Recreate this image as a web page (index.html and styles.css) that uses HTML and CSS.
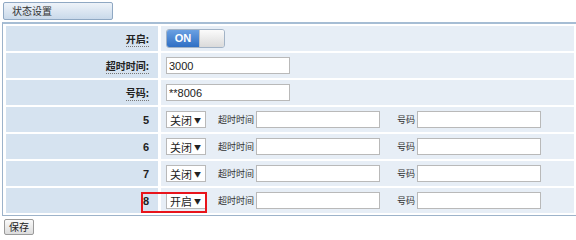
FILE: index.html
```html
<!DOCTYPE html>
<html lang="zh-CN">
<head>
<meta charset="UTF-8" />
<title>状态设置</title>
<link rel="stylesheet" href="styles.css">
</head>
<body>

<div class="tab">状态设置</div>

<table class="grid">
  <tr>
    <th><span class="lbl">开启:</span></th>
    <td><span class="toggle"><span class="on">ON</span><span class="off"></span></span></td>
  </tr>
  <tr>
    <th><span class="lbl">超时时间:</span></th>
    <td><input class="txt" type="text" value="3000"></td>
  </tr>
  <tr>
    <th><span class="lbl">号码:</span></th>
    <td><input class="txt" type="text" value="**8006"></td>
  </tr>
  <tr class="ext">
    <th>5</th>
    <td><div class="line"><span class="sel">关闭<i>▼</i></span><span class="cap">超时时间</span><input class="txt" type="text"><span class="cap gap">号码</span><input class="txt" type="text"></div></td>
  </tr>
  <tr class="ext">
    <th>6</th>
    <td><div class="line"><span class="sel">关闭<i>▼</i></span><span class="cap">超时时间</span><input class="txt" type="text"><span class="cap gap">号码</span><input class="txt" type="text"></div></td>
  </tr>
  <tr class="ext">
    <th>7</th>
    <td><div class="line"><span class="sel">关闭<i>▼</i></span><span class="cap">超时时间</span><input class="txt" type="text"><span class="cap gap">号码</span><input class="txt" type="text"></div></td>
  </tr>
  <tr class="ext">
    <th>8</th>
    <td><div class="line"><span class="sel">开启<i>▼</i></span><span class="cap">超时时间</span><input class="txt" type="text"><span class="cap gap">号码</span><input class="txt" type="text"></div></td>
  </tr>
</table>

<!-- red highlight box drawn over row 8 -->
<div class="mark"></div>

<button class="save" type="button">保存</button>

</body>
</html>
```

FILE: styles.css
```css
html { overflow: hidden; }
body { margin: 0; padding: 2px 0 0 2px; background: #fff; color: #222; font-family: "Liberation Sans", "Noto Sans CJK SC", sans-serif; font-size: 11px; position: relative; }

.tab { width: 100px; height: 16px; margin-left: 1px; padding-left: 8px; line-height: 16px; color: #333; border: 1px solid #8fa8c3; border-radius: 2px; background: linear-gradient(#eef3f9, #c9d9ea); font-family: "Noto Sans CJK SC", sans-serif; font-size: 10px; }

.grid { width: 576px; margin-top: 2px; border-collapse: separate; border-spacing: 3px 2px; border: 1px solid #9db3ca; border-top: 2px solid #a6bdd4; background: #fff; }
.grid th { width: 143px; height: 25px; padding: 0 9px 0 0; text-align: right; background: #d6e3f0; font-family: "Noto Sans CJK SC", sans-serif; font-size: 10px; font-weight: bold; color: #222; }
.grid td { height: 25px; padding: 0 0 0 5px; background: #e7eef6; }
.grid .ext th { font-family: "Liberation Sans", sans-serif; font-size: 11px; }
.lbl { border-bottom: 1px dotted #777; }

.toggle { display: flex; width: 59px; height: 19px; border: 1px solid #a2b3c6; border-radius: 3px; overflow: hidden; box-sizing: border-box; }
.toggle .on { width: 32px; line-height: 17px; text-align: center; color: #fff; font-weight: bold; font-size: 11px; background: linear-gradient(#6aa0e2, #2f6fc4); }
.toggle .off { flex: 1; background: linear-gradient(#fbfbfb, #dadada); border-left: 1px solid #c4c4c4; }

.txt { width: 124px; height: 17px; box-sizing: border-box; margin: 0; padding: 0 2px; border: 1px solid #b9b9b9; background: #fff; font-family: "Liberation Sans", sans-serif; font-size: 11px; color: #222; }

.line { display: flex; align-items: center; }
.sel { display: flex; align-items: center; justify-content: space-between; width: 40px; height: 17px; box-sizing: border-box; padding: 0 4px 0 3px; border: 1px solid #b9b9b9; background: #fff; font-family: "Noto Sans CJK SC", sans-serif; font-size: 11px; }
.sel i { font-style: normal; font-size: 7px; }
.cap { margin: 0 2px 0 12px; color: #333; font-family: "Noto Sans CJK SC", sans-serif; font-size: 9px; }
.cap.gap { margin-left: 17px; }

.mark { position: absolute; left: 141px; top: 192px; width: 62px; height: 17px; border: 2px solid #e8141b; }

.save { display: block; margin: 3px 0 0 2px; height: 16px; padding: 0 4px; border: 1px solid #9a9a9a; border-radius: 2px; background: linear-gradient(#fafafa, #dcdcdc); font-family: "Noto Sans CJK SC", sans-serif; font-size: 10px; color: #222; line-height: 12px; }
```
